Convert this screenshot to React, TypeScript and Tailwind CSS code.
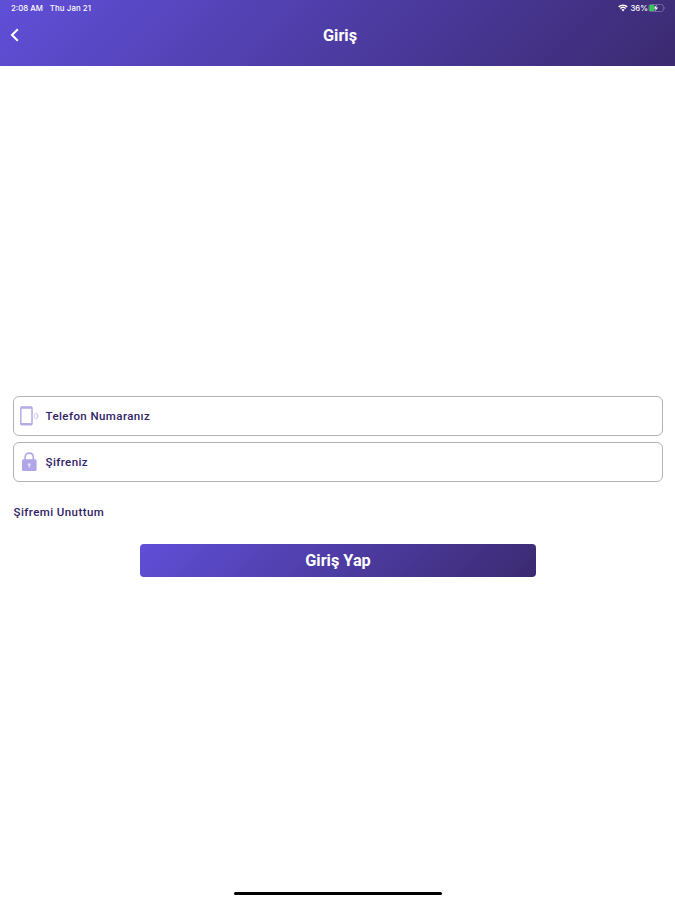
import type { ReactNode } from "react";

type FieldProps = {
    icon: ReactNode;
    label: string;
};

function WifiIcon() {
    return (
        <svg width="10" height="8" viewBox="0 0 10 8" fill="none" className="-mt-px">
            <path d="M0.8 2.9C3.1 0.7 6.9 0.7 9.2 2.9" stroke="white" strokeWidth="1.7" />
            <path d="M2.3 4.5C3.8 3.1 6.2 3.1 7.7 4.5" stroke="white" strokeWidth="1.6" />
            <path d="M5 7.4L3.4 5.7C4.3 4.9 5.7 4.9 6.6 5.7L5 7.4Z" fill="white" />
        </svg>
    );
}

function BatteryIcon() {
    return (
        <svg width="18" height="8" viewBox="0 0 18 8" fill="none" className="-mt-px">
            <rect x="0.8" y="0.5" width="14.5" height="7" rx="1.8" stroke="#7d72a8" strokeWidth="0.8" />
            <rect x="1.3" y="1" width="5.2" height="6" rx="0.8" fill="#35c75a" />
            <path d="M8.7 0.8L5.7 4.4H7.7L7 7.3L10.2 3.5H8.1L8.7 0.8Z" fill="white" />
            <path d="M16.4 2.8V5.2C17.4 4.8 17.4 3.2 16.4 2.8Z" fill="#7d72a8" />
        </svg>
    );
}

function PhoneIcon() {
    return (
        <svg width="20" height="20" viewBox="0 0 20 20" fill="none">
            <rect x="1.8" y="1" width="11.2" height="17.8" rx="1" stroke="#b5ace9" strokeWidth="1.5" />
            <path d="M2 1.8H12.8M2 17.9H12.8" stroke="#b5ace9" strokeWidth="2" />
            <path d="M15.2 7.6V12.4" stroke="#d0caf2" strokeWidth="1" />
            <path d="M16.8 6.8L19.2 10L16.8 13.2" stroke="#c5bdef" strokeWidth="1.1" />
        </svg>
    );
}

function LockIcon() {
    return (
        <svg width="20" height="20" viewBox="0 0 20 20" fill="none">
            <path d="M6.1 8.5V5.3C6.1 -0.3 14.3 -0.3 14.3 5.3V8.5" stroke="#b0a6e7" strokeWidth="1.6" />
            <rect x="3" y="7.2" width="14.6" height="11.8" rx="1.6" fill="#b0a6e7" />
            <path d="M10.3 11.2C8.5 11.2 8.3 13.2 9.6 13.8V15.4H11V13.8C12.3 13.2 12.1 11.2 10.3 11.2Z" fill="#e5e1f8" />
        </svg>
    );
}

function Field({ icon, label }: FieldProps) {
    return (
        <div className="flex h-10 w-full cursor-text items-center rounded-[6px] border border-[#b3b3b3] bg-white pl-[5px]">
            {icon}
            <span className="ml-[6.5px] text-[11.5px] leading-4 font-medium tracking-[0.42px] text-[#302266]">{label}</span>
        </div>
    );
}

export default function App() {
    return (
        <div className="flex h-[900px] w-full flex-col overflow-hidden bg-white font-[Roboto,sans-serif]">
            <header className="h-[66px] shrink-0 bg-linear-[135deg,#604fd8_0%,#3b2a70_100%] text-white">
                <div className="flex h-[17px] items-center justify-between pr-[9px] pl-[11px] font-[Inter,sans-serif] text-[7.8px] font-medium">
                    <div className="flex gap-[7px]">
                        <span>2:08 AM</span>
                        <span className="tracking-[0.1px]">Thu Jan 21</span>
                    </div>
                    <div className="flex items-center">
                        <WifiIcon />
                        <span className="ml-0.5">36%</span>
                        <BatteryIcon />
                    </div>
                </div>
                <div className="grid h-[38px] grid-cols-[40px_1fr_40px] items-center">
                    <button aria-label="Geri" className="pl-[10px]">
                        <svg width="10" height="14" viewBox="0 0 10 14" fill="none" className="-mt-0.5">
                            <path d="M7.8 1.2L2 7L7.8 12.8" stroke="white" strokeWidth="2.1" />
                        </svg>
                    </button>
                    <h1 className="ml-[5px] text-center text-[16.3px] leading-5 font-bold">Giriş</h1>
                </div>
            </header>

            <main className="flex flex-1 flex-col px-[13px] pt-[330px]">
                <form className="flex w-[650px] flex-col gap-1.5">
                    <Field icon={<PhoneIcon />} label="Telefon Numaranız" />
                    <Field icon={<LockIcon />} label="Şifreniz" />
                </form>
                <a className="mt-[22px] ml-[0.5px] self-start text-[11.5px] leading-4 font-medium tracking-[0.43px] text-[#302266]">
                    Şifremi Unuttum
                </a>
                <button className="mt-6 ml-[127px] h-[33px] w-[396px] rounded-[4px] bg-linear-[135deg,#604fd8_0%,#3b2a70_100%] text-[16.3px] leading-5 font-bold text-white">
                    Giriş Yap
                </button>
            </main>

            <footer className="flex h-[8px] shrink-0 justify-center">
                <div className="h-[3px] w-[208px] rounded-full bg-black" />
            </footer>
        </div>
    );
}
